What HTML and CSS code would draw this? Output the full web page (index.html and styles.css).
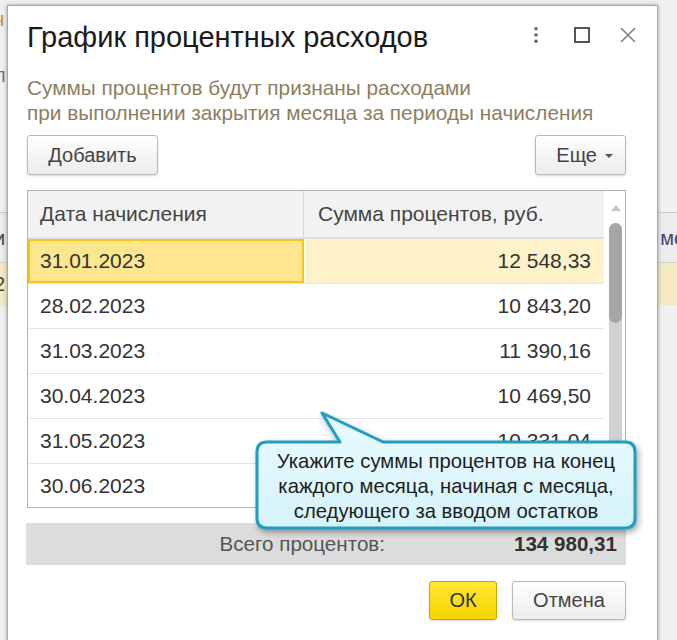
FILE: index.html
```html
<!DOCTYPE html>
<html lang="ru">
<head>
<meta charset="utf-8">
<title>График процентных расходов</title>
<link rel="stylesheet" href="styles.css">
</head>
<body>
<div class="backdrop">
  <div class="bg-top">
    <div class="bg-glyph bg-glyph-orange">ч</div>
    <div class="bg-glyph bg-glyph-gray">л</div>
  </div>
  <div class="bg-head">
    <span class="bg-left">и</span>
    <span class="bg-right">мо</span>
  </div>
  <div class="bg-row">
    <span class="bg-left">2</span>
  </div>
</div>

<div class="dialog">
  <div class="title-row">
    <div class="title">График процентных расходов</div>
    <div class="win-icons">
      <svg class="ico" width="16" height="16" viewBox="0 0 16 16"><circle cx="8" cy="1.8" r="1.8" fill="#666"/><circle cx="8" cy="8" r="1.8" fill="#666"/><circle cx="8" cy="14.2" r="1.8" fill="#666"/></svg>
      <svg class="ico" width="16" height="16" viewBox="0 0 16 16"><rect x="1" y="1" width="14" height="14" fill="none" stroke="#555" stroke-width="2"/></svg>
      <svg class="ico" width="16" height="16" viewBox="0 0 16 16"><path d="M1 1 L15 15 M15 1 L1 15" stroke="#808080" stroke-width="1.6" fill="none"/></svg>
    </div>
  </div>

  <div class="subtitle">Суммы процентов будут признаны расходами<br>при выполнении закрытия месяца за периоды начисления</div>

  <div class="toolbar">
    <button class="btn btn-add">Добавить</button>
    <button class="btn btn-more">Еще <span class="caret"></span></button>
  </div>

  <div class="table">
    <div class="grid">
      <div class="row head">
        <div class="cell c1">Дата начисления</div>
        <div class="cell c2">Сумма процентов, руб.</div>
      </div>
      <div class="row sel">
        <div class="cell c1"><span>31.01.2023</span></div>
        <div class="cell c2 num">12 548,33</div>
      </div>
      <div class="row">
        <div class="cell c1">28.02.2023</div>
        <div class="cell c2 num">10 843,20</div>
      </div>
      <div class="row">
        <div class="cell c1">31.03.2023</div>
        <div class="cell c2 num">11 390,16</div>
      </div>
      <div class="row">
        <div class="cell c1">30.04.2023</div>
        <div class="cell c2 num">10 469,50</div>
      </div>
      <div class="row">
        <div class="cell c1">31.05.2023</div>
        <div class="cell c2 num">10 331,04</div>
      </div>
      <div class="row">
        <div class="cell c1">30.06.2023</div>
        <div class="cell c2 num">10 612,77</div>
      </div>
    </div>
    <div class="scrollbar">
      <div class="arrow-up"></div>
      <div class="track"><div class="thumb"></div></div>
    </div>
  </div>

  <div class="footer">
    <div class="total-label">Всего процентов:</div>
    <div class="total-value">134 980,31</div>
  </div>

  <div class="actions">
    <button class="btn btn-ok">ОК</button>
    <button class="btn btn-cancel">Отмена</button>
  </div>
</div>

<div class="callout">
  <svg class="callout-shape" width="395" height="135" viewBox="250 405 395 135">
    <defs>
      <linearGradient id="cg" x1="0" y1="0" x2="0" y2="1">
        <stop offset="0" stop-color="#e9fbff"/>
        <stop offset="1" stop-color="#d6f3fb"/>
      </linearGradient>
    </defs>
    <path d="M267 442 L340 442 L322 413 L383 442 L625 442 Q635 442 635 452 L635 518 Q635 528 625 528 L267 528 Q257 528 257 518 L257 452 Q257 442 267 442 Z" fill="url(#cg)" stroke="#1c9fc3" stroke-width="3" stroke-linejoin="round"/>
  </svg>
  <div class="callout-text">Укажите суммы процентов на конец<br>каждого месяца, начиная с месяца,<br>следующего за вводом остатков</div>
</div>
</body>
</html>
```

FILE: styles.css
```css
* { box-sizing: border-box; }
html, body { margin: 0; padding: 0; }
body {
  width: 677px;
  height: 640px;
  overflow: hidden;
  background: #f0f0f0;
  font-family: "Liberation Sans", Arial, sans-serif;
  position: relative;
}

/* background window */
.backdrop { width: 677px; }
.bg-top { height: 212px; position: relative; padding-top: 8px; }
.bg-glyph { font-size: 20px; line-height: 22px; margin-left: -6px; }
.bg-glyph-orange { color: #c98a3c; }
.bg-glyph-gray { color: #777; margin-top: 34px; }
.bg-head {
  height: 51px;
  background: #ececec;
  border-top: 1px solid #c8c8c8;
  border-bottom: 1px solid #d2d2d2;
  display: flex;
  justify-content: space-between;
  align-items: center;
  padding-top: 2px;
  font-size: 20px;
}
.bg-left { margin-left: -6px; color: #444; }
.bg-right { margin-right: -8px; color: #4b3f78; }
.bg-row {
  height: 42px;
  background: #f3e9c3;
  display: flex;
  align-items: center;
  font-size: 20px;
}

/* dialog */
.dialog {
  position: absolute;
  left: 7px;
  top: 5px;
  width: 651px;
  height: 660px;
  background: #fff;
  border: 1px solid #a8a8a8;
  box-shadow: 0 0 4px rgba(0, 0, 0, 0.35);
  padding: 15px 31px 0 19px;
  color: #333;
}
.title-row {
  height: 32px;
  display: flex;
  align-items: center;
}
.title {
  flex: 1;
  font-size: 29px;
  line-height: 32px;
  color: #1a1a1a;
  white-space: nowrap;
}
.win-icons {
  display: flex;
  gap: 30px;
  margin-right: -10px;
  margin-top: -4px;
}
.ico { display: block; }

.subtitle {
  margin-top: 22px;
  font-size: 20.8px;
  line-height: 25px;
  color: #8d7e5f;
  white-space: nowrap;
}

.toolbar {
  margin-top: 10px;
  display: flex;
  justify-content: space-between;
}
.btn {
  font-family: "Liberation Sans", Arial, sans-serif;
  font-size: 20px;
  color: #444;
  height: 40px;
  padding: 0;
  border: 1px solid #b8b8b8;
  border-radius: 3px;
  background: linear-gradient(#ffffff, #ececec);
  box-shadow: 0 1px 2px rgba(0, 0, 0, 0.15);
}
.btn-add { width: 131px; }
.btn-more {
  width: 91px;
  display: flex;
  align-items: center;
  justify-content: flex-end;
  padding-right: 12px;
  gap: 8px;
}
.caret {
  width: 0;
  height: 0;
  border-left: 4px solid transparent;
  border-right: 4px solid transparent;
  border-top: 4px solid #555;
  margin-top: 2px;
}

/* table */
.table {
  margin-top: 15px;
  height: 318px;
  border: 1px solid #b4b4b4;
  display: flex;
  overflow: hidden;
}
.grid { width: 576px; }
.row {
  display: flex;
  height: 45px;
  border-bottom: 1px solid #e4e4e4;
  font-size: 21px;
  color: #333;
}
.row.head {
  height: 48px;
  background: #f2f2f2;
  border-bottom: 2px solid #e0e0e0;
  color: #444;
}
.cell {
  display: flex;
  align-items: center;
  white-space: nowrap;
}
.c1 { width: 276px; padding-left: 12px; }
.c2 { flex: 1; padding-left: 14px; }
.head .c1 { border-right: 1px solid #d4d4d4; }
.num { justify-content: flex-end; padding-right: 13px; }
.row.sel .c1 {
  background: #fde68e;
  border: 2px solid #f6c41a;
  padding-left: 10px;
  margin: 0 1px 0 0;
}
.row.sel .c2 { background: #fdf2c9; }

.scrollbar {
  flex: 1;
  padding: 14px 3px 0 5px;
}
.arrow-up {
  width: 0;
  height: 0;
  margin: 0 auto;
  border-left: 5px solid transparent;
  border-right: 5px solid transparent;
  border-bottom: 6px solid #c8c8c8;
}
.track {
  margin-top: 12px;
  height: 300px;
  background: #d2d2d2;
  border-radius: 7px 7px 0 0;
}
.thumb {
  height: 100px;
  background: #a6a6a6;
  border-radius: 7px;
}

/* footer */
.footer {
  margin-top: 15px;
  margin-left: -1px;
  height: 42px;
  background: #dcdcdc;
  display: flex;
  align-items: center;
  font-size: 20.6px;
}
.total-label {
  width: 359px;
  text-align: right;
  color: #555;
}
.total-value {
  flex: 1;
  text-align: right;
  padding-right: 9px;
  font-weight: bold;
  color: #333;
}

.actions {
  margin-top: 16px;
  display: flex;
  justify-content: flex-end;
  gap: 15px;
}
.btn-ok {
  width: 68px;
  height: 39px;
  background: linear-gradient(#ffe733, #f6d400);
  border-color: #c9a700;
  color: #333;
}
.btn-cancel {
  width: 114px;
  height: 39px;
}

/* callout tooltip */
.callout {
  position: absolute;
  left: 250px;
  top: 405px;
  width: 395px;
  height: 135px;
}
.callout-shape {
  position: absolute;
  left: 0;
  top: 0;
  filter: drop-shadow(2px 3px 3px rgba(0, 0, 0, 0.35));
}
.callout-text {
  position: relative;
  margin-left: 7px;
  width: 378px;
  padding-top: 44px;
  text-align: center;
  font-size: 20.3px;
  line-height: 25px;
  color: #1e1e1e;
  white-space: nowrap;
}
```
